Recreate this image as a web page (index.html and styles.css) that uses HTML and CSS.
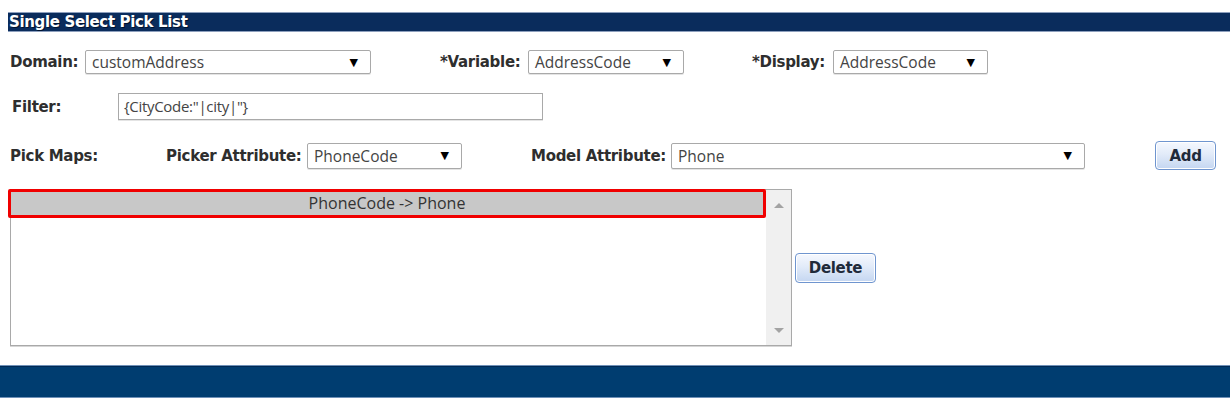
FILE: index.html
```html
<!DOCTYPE html>
<html>
<head>
<meta charset="utf-8">
<link rel="stylesheet" href="styles.css">
</head>
<body>
<div class="panel">
  <div class="titlebar">Single Select Pick List</div>

  <div class="row row1">
    <div class="group">
      <span class="label w-domain">Domain:</span>
      <div class="select s-domain"><span class="val">customAddress</span><span class="arrow">▼</span></div>
    </div>
    <div class="group g-variable">
      <span class="label w-variable">*Variable:</span>
      <div class="select s-variable"><span class="val">AddressCode</span><span class="arrow">▼</span></div>
    </div>
    <div class="group g-display">
      <span class="label w-display">*Display:</span>
      <div class="select s-display"><span class="val">AddressCode</span><span class="arrow">▼</span></div>
    </div>
  </div>

  <div class="row row2">
    <span class="label w-filter">Filter:</span>
    <div class="input">{CityCode:"|city|"}</div>
  </div>

  <div class="row row3">
    <span class="label w-pickmaps">Pick Maps:</span>
    <span class="label w-picker">Picker Attribute:</span>
    <div class="select s-picker"><span class="val">PhoneCode</span><span class="arrow">▼</span></div>
    <span class="label w-model">Model Attribute:</span>
    <div class="select s-model"><span class="val">Phone</span><span class="arrow">▼</span></div>
    <button class="btn btn-add">Add</button>
  </div>

  <div class="row row4">
    <div class="listbox">
      <div class="listbody">
        <div class="item">PhoneCode -&gt; Phone</div>
      </div>
      <div class="scrollbar">
        <span class="tri up"></span>
        <span class="tri down"></span>
      </div>
    </div>
    <button class="btn btn-delete">Delete</button>
  </div>

  <div class="footer"></div>
</div>
</body>
</html>
```

FILE: styles.css
```css
* { box-sizing: border-box; }

html, body {
  margin: 0;
  padding: 0;
  background: #ffffff;
}

body {
  width: 1230px;
  height: 408px;
  overflow: hidden;
  font-family: "Open Sans", "DejaVu Sans", sans-serif;
  color: #333;
}

.panel {
  padding-top: 12px;
}

.titlebar {
  margin-left: 8px;
  height: 20px;
  line-height: 19px;
  padding-left: 1px;
  background: #0a2c5c;
  color: #ffffff;
  font-family: "DejaVu Sans", sans-serif;
  font-weight: bold;
  font-size: 15px;
  letter-spacing: -0.35px;
  text-shadow: 1px 1px 0 #00122e;
  border-top: 1px solid #8d9fbd;
  border-bottom: 1px solid #8d9fbd;
}

.row {
  display: flex;
  align-items: center;
  padding-left: 10px;
}

.row1 { margin-top: 18px; height: 24px; }
.row2 { margin-top: 19px; height: 27px; padding-left: 12px; }
.row3 { margin-top: 21px; height: 29px; }
.row4 { margin-top: 19px; align-items: center; }

.group {
  display: flex;
  align-items: center;
}
.g-variable { margin-left: 69px; }
.g-display { margin-left: 68px; }

.label {
  font-family: "DejaVu Sans", sans-serif;
  font-weight: bold;
  font-size: 15px;
  letter-spacing: -0.3px;
  color: #2e2e2e;
  white-space: nowrap;
  flex: none;
}

.w-domain { width: 75px; }
.w-variable { width: 88px; }
.w-display { width: 81px; }
.w-filter { width: 106px; }
.w-pickmaps { width: 156px; }
.w-picker { width: 141px; }
.w-model { width: 140px; margin-left: 69px; }

.select {
  display: flex;
  align-items: center;
  justify-content: space-between;
  height: 24px;
  border: 1px solid #a9a9a9;
  border-radius: 2px;
  background: #ffffff;
  padding: 0 12px 0 6px;
  font-size: 15.5px;
  color: #444;
  box-shadow: 0 1px 0 #e4e4e4;
  flex: none;
}

.select .arrow {
  font-family: "DejaVu Sans", sans-serif;
  font-size: 11px;
  color: #000;
}

.s-domain { width: 286px; }
.s-variable { width: 156px; }
.s-display { width: 155px; }
.s-picker { width: 155px; height: 26px; }
.s-model { width: 414px; height: 26px; }

.input {
  width: 425px;
  height: 27px;
  border: 1px solid #a9a9a9;
  padding: 0 5px;
  line-height: 25px;
  font-size: 15px;
  color: #444;
  letter-spacing: -0.3px;
  box-shadow: 0 1px 0 #e4e4e4;
}

.btn {
  font-family: "DejaVu Sans", sans-serif;
  font-weight: bold;
  font-size: 15px;
  letter-spacing: -0.3px;
  color: #1f2a3a;
  border: 1px solid #6f95cf;
  border-radius: 4px;
  background: linear-gradient(#f5f8fe 0%, #e2ebf9 45%, #c4d6f1 100%);
  box-shadow: inset 0 0 0 1px #ffffff;
  padding: 0;
  flex: none;
}

.btn-add {
  margin-left: 70px;
  width: 61px;
  height: 29px;
}

.btn-delete {
  margin-left: 3px;
  width: 81px;
  height: 30px;
}

.listbox {
  display: flex;
  width: 782px;
  height: 157px;
  border: 1px solid #a9a9a9;
  box-shadow: 0 1px 0 #d6d6d6;
  background: #ffffff;
  flex: none;
}

.listbody {
  flex: 1;
  margin-top: -1px;
}

.item {
  margin-left: -3px;
  height: 29px;
  border: 3px solid #f00000;
  border-radius: 2px;
  background: #c8c8c8;
  text-align: center;
  font-size: 16px;
  line-height: 22px;
  color: #333;
}

.scrollbar {
  width: 25px;
  background: #f0f0f0;
  display: flex;
  flex-direction: column;
  justify-content: space-between;
  align-items: center;
  padding: 13px 0 12px;
}

.tri {
  width: 0;
  height: 0;
  border-left: 5px solid transparent;
  border-right: 5px solid transparent;
}
.tri.up { border-bottom: 5px solid #a3a3a3; }
.tri.down { border-top: 5px solid #a3a3a3; }

.footer {
  margin-top: 19px;
  height: 33px;
  background: #003d70;
  border-top: 1px solid #6f91b8;
  border-bottom: 1px solid #6f91b8;
  box-shadow: inset 0 1px 0 #002a55;
}
```
